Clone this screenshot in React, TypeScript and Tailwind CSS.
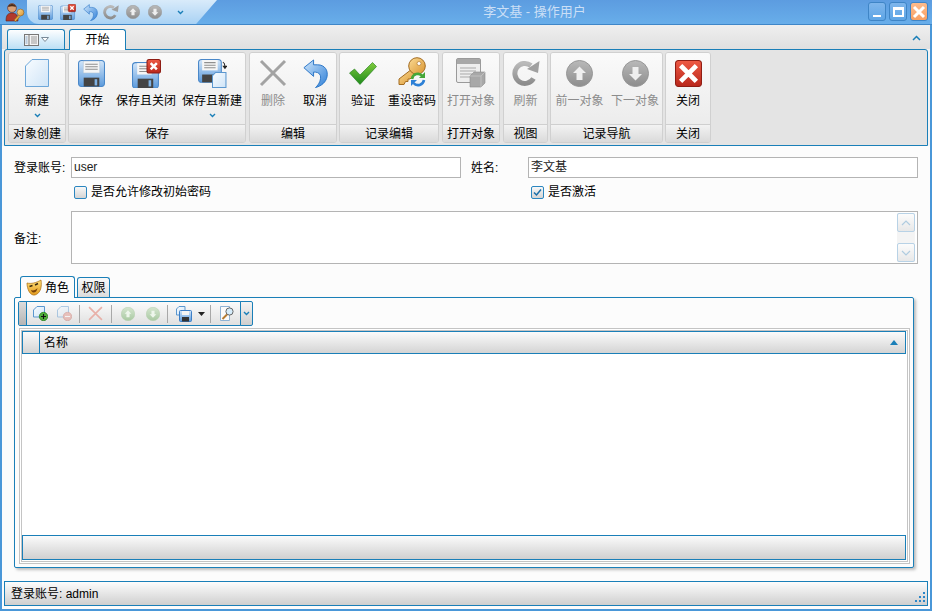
import React from "react";

const Defs = () => (
  <svg className="absolute w-0 h-0" aria-hidden="true">
    <defs>
      <linearGradient id="fl" x1="0" y1="0" x2="0" y2="1"><stop offset="0" stopColor="#d3e6f9" /><stop offset="1" stopColor="#5b9adc" /></linearGradient>
      <linearGradient id="pg" x1="0" y1="0" x2="1" y2="1"><stop offset="0" stopColor="#f8fcff" /><stop offset="1" stopColor="#cfe4f7" /></linearGradient>
      <linearGradient id="ud" x1="0" y1="0" x2="1" y2="1"><stop offset="0" stopColor="#cfe6fb" /><stop offset="1" stopColor="#2f80d8" /></linearGradient>
      <linearGradient id="gk" x1="0" y1="0" x2="0" y2="1"><stop offset="0" stopColor="#7ecb3c" /><stop offset="1" stopColor="#1f8a1c" /></linearGradient>
      <linearGradient id="gc" x1="0" y1="0" x2="0" y2="1"><stop offset="0" stopColor="#b9b9b9" /><stop offset="1" stopColor="#8d8d8d" /></linearGradient>
      <linearGradient id="rd" x1="0" y1="0" x2="0" y2="1"><stop offset="0" stopColor="#ee5a45" /><stop offset="1" stopColor="#b9271b" /></linearGradient>
      <linearGradient id="ky" x1="0" y1="0" x2="1" y2="1"><stop offset="0" stopColor="#fbdc96" /><stop offset="1" stopColor="#d9932e" /></linearGradient>
      <linearGradient id="gn" x1="0" y1="0" x2="0" y2="1"><stop offset="0" stopColor="#d5e6d0" /><stop offset="1" stopColor="#a9c9a2" /></linearGradient>
      <linearGradient id="mk" x1="0" y1="0" x2="0" y2="1"><stop offset="0" stopColor="#ffe07a" /><stop offset="1" stopColor="#e39a1c" /></linearGradient>
    </defs>
  </svg>
);

const Floppy = ({ s = 26 }: { s?: number }) => (
  <svg width={s} height={s} viewBox="0 0 26 26">
    <rect x="0.5" y="0.5" width="25" height="25" rx="3" fill="url(#fl)" stroke="#4a88c9" />
    <rect x="5" y="1" width="16" height="11.500" fill="#f6f6f6" stroke="#a9bfd4" strokeWidth="0.5" />
    <path d="M7 4h12M7 6.500h12M7 9h12" stroke="#8f8f8f" strokeWidth="1" />
    <rect x="5.500" y="17" width="15" height="8.500" fill="#444" />
    <rect x="16" y="18.500" width="2.500" height="6" fill="#7fb2e4" />
  </svg>
);

const RedX = ({ s = 26 }: { s?: number }) => (
  <svg width={s} height={s} viewBox="0 0 26 26">
    <rect x="0.5" y="0.5" width="25" height="25" rx="3" fill="url(#rd)" stroke="#8f1d14" />
    <path d="M7 7l12 12M19 7L7 19" stroke="#fff" strokeWidth="4.500" strokeLinecap="square" />
  </svg>
);

const FloppyX = ({ s = 28 }: { s?: number }) => (
  <svg width={s} height={s} viewBox="0 0 28 28">
    <g transform="translate(0 3)"><rect x="0.5" y="0.5" width="25" height="24.500" rx="3" fill="url(#fl)" stroke="#4a88c9" />
      <rect x="5" y="1" width="14" height="11" fill="#f6f6f6" />
      <path d="M7 4h10M7 6.500h10M7 9h10" stroke="#8f8f8f" />
      <rect x="5.500" y="16" width="15" height="9" fill="#444" /><rect x="16" y="17.500" width="2.500" height="6" fill="#7fb2e4" /></g>
    <g transform="translate(14 0)"><rect x="0.5" y="0.5" width="13" height="13" rx="2" fill="url(#rd)" stroke="#8f1d14" />
      <path d="M4 4l6 6M10 4l-6 6" stroke="#fff" strokeWidth="2.400" /></g>
  </svg>
);

const FloppyNew = ({ s = 28 }: { s?: number }) => (
  <svg width={s} height={s} viewBox="0 0 28 28">
    <rect x="0.5" y="0.5" width="22" height="22" rx="3" fill="url(#fl)" stroke="#4a88c9" />
    <rect x="4" y="1" width="15" height="10" fill="#f6f6f6" />
    <path d="M6 3.500h11M6 6h11M6 8.500h11" stroke="#8f8f8f" />
    <rect x="4" y="15" width="14" height="7.500" fill="#444" />
    <path d="M17 13h10v14.500H14V16z" fill="url(#pg)" stroke="#5b97cf" />
    <path d="M24 3c2 1 2 3 2 4" fill="none" stroke="#222" />
    <path d="M23.500 6.500h5L26 10z" fill="#222" />
  </svg>
);

const Page = ({ w = 24, h = 28 }: { w?: number; h?: number }) => (
  <svg width={w} height={h} viewBox="0 0 24 28">
    <path d="M7 0.5H23.500V27.500H0.5V7Z" fill="url(#pg)" stroke="#6da7d9" />
  </svg>
);

const GrayX = ({ s = 28, c = "#a3a3a3" }: { s?: number; c?: string }) => (
  <svg width={s} height={s} viewBox="0 0 28 28">
    <path d="M2 2l24 24M26 2L2 26" stroke={c} strokeWidth="3" />
  </svg>
);

const Undo = ({ s = 26 }: { s?: number }) => (
  <svg width={s} height={s} viewBox="0 0 26 30">
    <path d="M1 9L11 1V6H15C23 6 26 12 25 18C24 24 19 28 13 29.500C17 26 19 21 18 17C17 14 14 13.500 11 13.500V18Z" fill="url(#ud)" stroke="#2a75c6" />
  </svg>
);

const Redo = ({ s = 28 }: { s?: number }) => (
  <svg width={s} height={s} viewBox="0 0 28 28">
    <path d="M21.500 19.500A10 10 0 1 1 19 6.500" fill="none" stroke="url(#gc)" strokeWidth="5" />
    <path d="M27.500 2L26 14L15 10Z" fill="#a0a0a0" />
  </svg>
);

const Check = () => (
  <svg width="28" height="23" viewBox="0 0 28 23">
    <path d="M0.5 11L5.500 7L11 13L23.500 0.5L27.500 4.500L11 22.500Z" fill="url(#gk)" stroke="#1c7a18" strokeWidth="0.6" />
  </svg>
);

const Key = () => (
  <svg width="30" height="30" viewBox="0 0 30 30" className="mb-[3px]">
    <path d="M15 12L2 22V27.500H7L8.500 24.500H11V22H13L19 16Z" fill="url(#ky)" stroke="#a36c22" />
    <circle cx="20" cy="9" r="8.300" fill="url(#ky)" stroke="#a36c22" />
    <circle cx="22" cy="6.500" r="2" fill="#fff" stroke="#a36c22" strokeWidth="0.6" />
    <path d="M15 22a6 6 0 0 1 10.500-3" fill="none" stroke="#45a638" strokeWidth="2.600" />
    <path d="M28 15v6h-6z" fill="#45a638" />
    <path d="M27 23a6 6 0 0 1-10.500 3" fill="none" stroke="#2d80d6" strokeWidth="2.600" />
    <path d="M14 29v-6h6z" fill="#2d80d6" />
  </svg>
);

const DocGray = () => (
  <svg width="30" height="30" viewBox="0 0 30 30">
    <rect x="0.5" y="0.5" width="24" height="24" rx="1.500" fill="#eeeeee" stroke="#9a9a9a" />
    <rect x="1" y="1" width="23" height="5" fill="#a8a8a8" />
    <path d="M4 10h16M4 13h16M4 16h12M4 19h10" stroke="#a9a9a9" />
    <path d="M14 18l4-4h11v11l-4 4H14z" fill="#a8a8a8" stroke="#8a8a8a" strokeWidth="0.6" />
    <path d="M14 18h11v11M25 18l4-4" fill="none" stroke="#c6c6c6" strokeWidth="0.8" />
  </svg>
);

const CircleArrow = ({ s = 27, up = true, green = false }: { s?: number; up?: boolean; green?: boolean }) => (
  <svg width={s} height={s} viewBox="0 0 27 27">
    <circle cx="13.500" cy="13.500" r="13" fill={green ? "url(#gn)" : "url(#gc)"} stroke={green ? "#b5cfae" : "#979797"} />
    <path d={up ? "M13.500 6.500L20 13H16.500V20H10.500V13H7Z" : "M13.500 20.500L20 14H16.500V7H10.500V14H7Z"} fill={green ? "#eef6ec" : "#efefef"} />
  </svg>
);

const Chevron = ({ c = "#1a7fb8" }: { c?: string }) => (
  <svg width="7" height="5" viewBox="0 0 7 5"><path d="M1 1l2.500 2.500L6 1" fill="none" stroke={c} strokeWidth="1.400" /></svg>
);

const Logo = () => (
  <svg width="20" height="20" viewBox="0 0 20 20">
    <path d="M1 19c0-6 2-8 6-8s6 2 6 8z" fill="#b23a2c" stroke="#5e2018" strokeWidth="0.6" />
    <circle cx="7" cy="6" r="4.400" fill="#d9a178" stroke="#5e2018" strokeWidth="0.6" />
    <path d="M3 5c1-4 7-4 8 0-3-1-5-1-8 0z" fill="#4a2a18" />
    <circle cx="15.500" cy="10.500" r="3.400" fill="url(#ky)" stroke="#8a5a1c" strokeWidth="0.6" />
    <path d="M13.500 13L9 18l1.500 1.500 1.500-1.500 3-3.500" fill="#e0a840" stroke="#8a5a1c" strokeWidth="0.6" />
  </svg>
);

const Mask = () => (
  <svg width="16" height="17" viewBox="0 0 16 17">
    <path d="M1 4c4 1 9 0 14-3 1 6 0 13-6 15C4 17 1 10 1 4z" fill="url(#mk)" stroke="#a86a10" strokeWidth="0.7" />
    <path d="M3.500 7.500l3-1M9 6l3-1.500" stroke="#3a2a10" strokeWidth="1.400" />
    <path d="M5 11c2 1 5 0 6.500-2-.5 3-2 4.500-4 4.500-1.500 0-2-1-2.500-2.500z" fill="#7a4208" />
  </svg>
);

const TbNew = ({ minus = false }: { minus?: boolean }) => (
  <svg width="15" height="15" viewBox="0 0 15 15" opacity={minus ? 0.45 : 1}>
    <path d="M4 .5H11.500V11H.5V4Z" fill="url(#pg)" stroke="#5b97cf" />
    <circle cx="10.500" cy="10.500" r="4.200" fill={minus ? "#e28b80" : "#4fae3a"} stroke={minus ? "#b9574c" : "#1f7a18"} strokeWidth="0.7" />
    <path d={minus ? "M8 10.500h5" : "M8 10.500h5M10.500 8v5"} stroke={minus ? "#fff" : "#111"} strokeWidth="1.100" />
  </svg>
);

const TbSave = () => (
  <svg width="16" height="16" viewBox="0 0 16 16">
    <path d="M3 .5H9V9H.5V3Z" fill="url(#pg)" stroke="#5b97cf" />
    <rect x="3.500" y="4.500" width="12" height="11" rx="1" fill="url(#fl)" stroke="#3d7fc6" />
    <rect x="6" y="5" width="7" height="4" fill="#f4f4f4" />
    <rect x="6" y="11" width="7" height="4.500" fill="#333" />
  </svg>
);

const TbFind = () => (
  <svg width="15" height="15" viewBox="0 0 15 15">
    <path d="M.5.5H9.500V14.500H.5Z" fill="#fbfbfb" stroke="#8fb2d4" />
    <circle cx="9.500" cy="5.500" r="3.600" fill="#d6ecfa" stroke="#666" />
    <path d="M7 8.500L2.500 13" stroke="#b57b32" strokeWidth="2" />
  </svg>
);

const WinBtn = ({ children, close = false }: { children: React.ReactNode; close?: boolean }) => (
  <div className={`w-[18px] h-[19px] rounded-[3px] border border-[#3f85c6] flex items-center justify-center ${close ? "bg-linear-to-b from-[#fdbb8c] to-[#f7a064]" : "bg-linear-to-b from-[#7fb6ec] to-[#5da5e6]"}`}>
    {children}
  </div>
);

const RibbonBtn = ({ w, label, icon, disabled = false, more = false }: { w: string; label: string; icon: React.ReactNode; disabled?: boolean; more?: boolean }) => (
  <div className={`${w} flex flex-col items-center`}>
    <div className="h-[40px] flex items-center justify-center">{icon}</div>
    <div className={`h-[16px] leading-[16px] whitespace-nowrap ${disabled ? "text-[#8c8c8c]" : "text-black"}`}>{label}</div>
    {more && <div className="h-[13px] flex items-center"><Chevron /></div>}
  </div>
);

const Group = ({ cls, title, children }: { cls: string; title: string; children: React.ReactNode }) => (
  <div className={`${cls} shrink-0 h-[91px] flex flex-col rounded-[3px] border border-[#d0d0d0] overflow-hidden`}>
    <div className="h-[72px] flex bg-linear-to-b from-[#fafafa] to-[#ececec] border-b border-[#cfcfcf]">{children}</div>
    <div className="flex-1 flex items-center justify-center bg-linear-to-b from-[#f3f3f3] to-[#dadada] leading-none whitespace-nowrap">{title}</div>
  </div>
);

const Input = ({ value, w }: { value: string; w: string }) => (
  <div className={`${w} h-[21px] border border-[#b4b4b4] bg-white pl-[2px] leading-[19px] text-[#222]`}>{value}</div>
);

const CheckBox = ({ checked = false }: { checked?: boolean }) => (
  <div className="w-[13px] h-[13px] rounded-[2px] border border-[#2b86c0] bg-linear-to-b from-[#f8f8f8] to-[#d4d4d4] flex items-center justify-center">
    {checked && <svg width="9" height="9" viewBox="0 0 9 9"><path d="M1 4.500L3.500 7L8 1.500" fill="none" stroke="#1a6ea8" strokeWidth="1.500" /></svg>}
  </div>
);

const ScrollBtn = ({ up }: { up: boolean }) => (
  <div className="w-[18px] h-[19px] rounded-[2px] border border-[#b8d2e6] bg-linear-to-b from-[#fcfcfc] to-[#e8e8e8] flex items-center justify-center">
    <svg width="10" height="6" viewBox="0 0 10 6"><path d={up ? "M1 5l4-4 4 4" : "M1 1l4 4 4-4"} fill="none" stroke="#b0cce0" strokeWidth="1.200" /></svg>
  </div>
);

const Sep = ({ cls }: { cls: string }) => <div className={`w-px h-[18px] bg-[#a8a8a8] ${cls}`} />;

export default function App() {
  return (
    <div className="relative w-[932px] h-[611px] overflow-hidden flex flex-col text-[12px] bg-[#f4f4f4] text-black [font-family:'Liberation_Sans','Noto_Sans_CJK_SC',sans-serif]">
      <Defs />
      {/* title bar */}
      <div className="h-[25px] shrink-0 flex items-center bg-linear-to-b from-[#5c9ce0] to-[#68aeea] border-b border-[#3f86c8]">
        <div className="w-[27px] pl-[5px] flex items-center"><Logo /></div>
        <div className="w-[190px] h-[24px] self-start flex items-center rounded-bl-[12px] bg-linear-to-b from-[#d9ebfa] to-[#a9d2f4] [clip-path:polygon(0_0,100%_0,89%_100%,0_100%)]">
          <div className="ml-[11px] w-[22px]"><Floppy s={15} /></div>
          <div className="w-[22px]"><FloppyX s={16} /></div>
          <div className="w-[21px]"><Undo s={17} /></div>
          <div className="w-[23px]"><Redo s={16} /></div>
          <div className="w-[22px]"><CircleArrow s={14} /></div>
          <div className="w-[29px]"><CircleArrow s={14} up={false} /></div>
          <Chevron c="#1a7fb8" />
        </div>
        <div className="flex-1 pr-[16px] text-center text-[13px] text-[#cbdff6] whitespace-nowrap">李文基 - 操作用户</div>
        <div className="flex items-center gap-[3px] mr-[4px] -mt-px">
          <WinBtn><div className="w-[8px] h-[2px] bg-white mt-[8px]" /></WinBtn>
          <WinBtn><div className="w-[11px] h-[10px] border-2 border-t-[3px] border-white" /></WinBtn>
          <WinBtn close><svg width="14" height="14" viewBox="0 0 14 14"><path d="M2 2l10 10M12 2L2 12" stroke="#fff" strokeWidth="3" /></svg></WinBtn>
        </div>
      </div>

      {/* window body */}
      <div className="flex-1 min-h-0 flex flex-col border-x-2 border-b-2 border-[#4a97d8]">
        {/* tab strip */}
        <div className="h-[24px] shrink-0 flex items-end pl-[5px] pr-[9px] bg-linear-to-b from-[#efefef] to-[#e0e0e0]">
          <div className="w-[58px] h-[20px] rounded-t-[3px] border border-b-0 border-[#1a7fb8] bg-linear-to-b from-[#fdfeff] to-[#bcdff5] flex items-center justify-center gap-[2px]">
            <svg width="15" height="12" viewBox="0 0 15 12"><rect x=".5" y=".5" width="14" height="11" fill="#f4f4f4" stroke="#777" /><path d="M5 1v10" stroke="#777" /><path d="M7 3h6M7 5h6M7 7h6M7 9h6" stroke="#999" /><path d="M1.500 2h2v8h-2z" fill="#bcd" /></svg>
            <svg width="8" height="5" viewBox="0 0 8 5"><path d="M.5.5h7L4 4.500z" fill="#fff" stroke="#7a8a99" /></svg>
          </div>
          <div className="ml-[4px] w-[57px] h-[21px] -mb-px z-10 rounded-t-[3px] border border-b-0 border-[#1a7fb8] bg-white flex items-center justify-center">开始</div>
          <div className="flex-1" />
          <div className="mb-[8px]"><svg width="9" height="6" viewBox="0 0 9 6"><path d="M1 5l3.500-3.500L8 5" fill="none" stroke="#1a7fb8" strokeWidth="1.500" /></svg></div>
        </div>

        {/* ribbon */}
        <div className="h-[97px] shrink-0 mx-[2px] rounded-t-[3px] border border-[#1a7fb8] bg-[#e4e4e4] pl-[3px] pt-[2px] flex">
          <Group cls="w-[58px]" title="对象创建">
            <RibbonBtn w="w-full" label="新建" icon={<Page />} more />
          </Group>
          <Group cls="w-[178px] ml-[2px]" title="保存">
            <RibbonBtn w="w-[44px]" label="保存" icon={<Floppy s={27} />} />
            <RibbonBtn w="w-[66px]" label="保存且关闭" icon={<FloppyX s={29} />} />
            <RibbonBtn w="w-[66px]" label="保存且新建" icon={<FloppyNew s={29} />} more />
          </Group>
          <Group cls="w-[88px] ml-[3px]" title="编辑">
            <RibbonBtn w="w-[46px]" label="删除" icon={<GrayX s={28} />} disabled />
            <RibbonBtn w="w-[38px]" label="取消" icon={<Undo s={29} />} />
          </Group>
          <Group cls="w-[100px] ml-[2px]" title="记录编辑">
            <RibbonBtn w="w-[46px]" label="验证" icon={<Check />} />
            <RibbonBtn w="w-[52px]" label="重设密码" icon={<Key />} />
          </Group>
          <Group cls="w-[58px] ml-[3px]" title="打开对象">
            <RibbonBtn w="w-full" label="打开对象" icon={<DocGray />} disabled />
          </Group>
          <Group cls="w-[45px] ml-[3px]" title="视图">
            <RibbonBtn w="w-full" label="刷新" icon={<Redo s={28} />} disabled />
          </Group>
          <Group cls="w-[113px] ml-[2px]" title="记录导航">
            <RibbonBtn w="w-[57px]" label="前一对象" icon={<CircleArrow />} disabled />
            <RibbonBtn w="w-[54px]" label="下一对象" icon={<CircleArrow up={false} />} disabled />
          </Group>
          <Group cls="w-[46px] ml-[2px]" title="关闭">
            <RibbonBtn w="w-full" label="关闭" icon={<RedX s={27} />} />
          </Group>
        </div>

        {/* form */}
        <div className="flex-1 min-h-0 flex flex-col bg-[#fcfcfc] pl-[12px] pr-[10px] pt-[11px]">
          <div className="flex items-center h-[21px]">
            <div className="w-[57px] whitespace-nowrap">登录账号:</div>
            <Input value="user" w="w-[390px]" />
            <div className="w-[57px] ml-[10px]">姓名:</div>
            <Input value="李文基" w="w-[390px]" />
          </div>
          <div className="flex items-center h-[14px] mt-[7px]">
            <div className="w-[60px]" />
            <CheckBox />
            <div className="ml-[4px] w-[440px]">是否允许修改初始密码</div>
            <CheckBox checked />
            <div className="ml-[4px]">是否激活</div>
          </div>
          <div className="flex items-center mt-[12px] h-[53px]">
            <div className="w-[57px] pt-[2px]">备注:</div>
            <div className="w-[847px] h-full border border-[#b4b4b4] bg-white flex justify-end pr-[2px] py-[1px]">
              <div className="flex flex-col justify-between bg-[#f4f4f4]"><ScrollBtn up /><ScrollBtn up={false} /></div>
            </div>
          </div>

          {/* detail tabs */}
          <div className="flex items-end h-[22px] mt-[11px] pl-[6px]">
            <div className="w-[55px] h-[22px] -mb-px z-10 rounded-t-[3px] border border-b-0 border-[#1a7fb8] bg-[#fcfcfc] flex items-center pl-[5px] gap-[3px]"><Mask />角色</div>
            <div className="ml-[2px] w-[33px] h-[20px] rounded-t-[3px] border border-b-0 border-[#1a7fb8] bg-linear-to-b from-[#fafafa] to-[#dcdcdc] flex items-center justify-center">权限</div>
          </div>
          <div className="w-[900px] h-[271px] border border-[#1a7fb8] rounded-[2px] bg-[#fcfcfc] shadow-[2px_2px_3px_rgba(0,0,0,0.25)] pt-[3px] pl-[3px] flex flex-col">
            {/* toolbar */}
            <div className="flex h-[25px] shrink-0">
              <div className="w-[223px] flex items-center rounded-l-[2px] border border-[#1a7fb8] bg-linear-to-b from-[#fbfbfb] to-[#e0e0e0]">
                <div className="w-[8px] h-full bg-linear-to-b from-[#dcdcdc] to-[#b5b5b5] border-r border-[#1a7fb8]" />
                <div className="ml-[6px]"><TbNew /></div>
                <div className="ml-[9px]"><TbNew minus /></div>
                <Sep cls="ml-[7px] mr-[8px]" />
                <GrayX s={15} c="#e8b0a8" />
                <Sep cls="ml-[8px] mr-[9px]" />
                <CircleArrow s={14} green />
                <div className="ml-[11px]"><CircleArrow s={14} up={false} green /></div>
                <Sep cls="ml-[7px] mr-[8px]" />
                <TbSave />
                <svg className="ml-[6px]" width="7" height="4" viewBox="0 0 7 4"><path d="M0 0h7L3.500 4z" fill="#222" /></svg>
                <Sep cls="ml-[5px] mr-[9px]" />
                <TbFind />
              </div>
              <div className="w-[13px] -ml-px rounded-r-[2px] border border-[#1a7fb8] bg-linear-to-b from-[#f4f4f4] to-[#cfcfcf] flex items-center justify-center"><Chevron /></div>
            </div>
            {/* grid */}
            <div className="mt-[2px] ml-[1px] w-[891px] h-[236px] border-[3px] border-double border-[#c4c4c4] bg-white flex flex-col pr-[1px] pb-[1px]">
              <div className="h-[23px] shrink-0 flex border border-[#1a7fb8] bg-linear-to-b from-[#fbfbfb] to-[#d4d4d4]">
                <div className="w-[17px] border-r border-[#1a7fb8]" />
                <div className="flex-1 pl-[4px] leading-[23px]">名称</div>
                <svg className="self-center mr-[7px]" width="8" height="5" viewBox="0 0 8 5"><path d="M4 0l4 5H0z" fill="#1a7fb8" /></svg>
              </div>
              <div className="flex-1" />
              <div className="h-[25px] shrink-0 border border-[#1a7fb8] bg-linear-to-b from-[#fbfbfb] to-[#d0d0d0]" />
            </div>
          </div>
        </div>

        {/* status bar */}
        <div className="bg-[#fcfcfc] px-[2px] pt-0 pb-[3px] shrink-0">
          <div className="h-[25px] border border-[#1a7fb8] bg-linear-to-b from-[#fdfdfd] to-[#cfcfcf] flex items-center pl-[6px] relative">
            <span>登录账号: admin</span>
            <div className="ml-auto mr-[2px] mt-[6px] grid grid-cols-3 gap-[2px]">
              <i /><i /><i className="w-[2px] h-[2px] bg-[#2b86c8]" />
              <i /><i className="w-[2px] h-[2px] bg-[#2b86c8]" /><i className="w-[2px] h-[2px] bg-[#2b86c8]" />
              <i className="w-[2px] h-[2px] bg-[#2b86c8]" /><i className="w-[2px] h-[2px] bg-[#2b86c8]" /><i className="w-[2px] h-[2px] bg-[#2b86c8]" />
            </div>
          </div>
        </div>
      </div>
    </div>
  );
}
